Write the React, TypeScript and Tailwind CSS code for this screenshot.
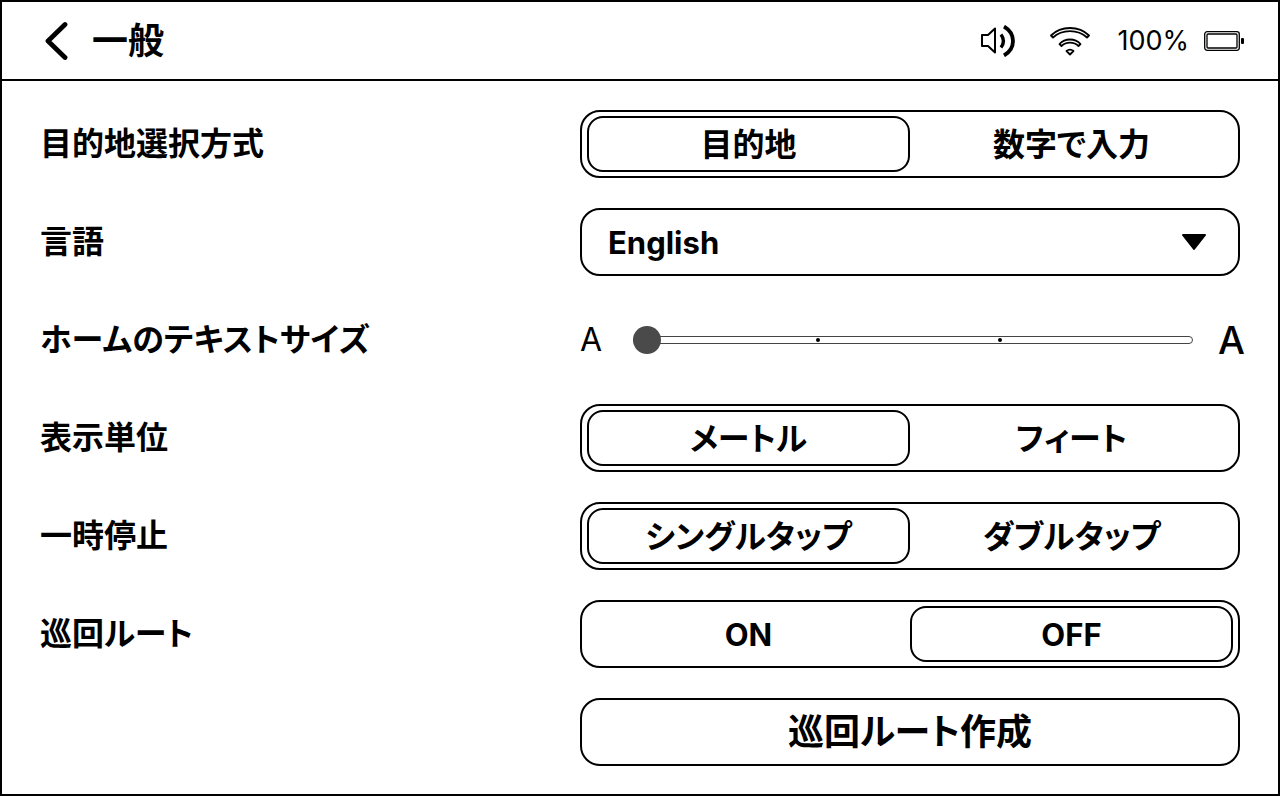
const jp = "font-['Inter','Noto_Sans_CJK_JP',sans-serif]";

function BackIcon() {
  return (
    <svg width="26" height="40" viewBox="0 0 26 40" fill="none" className="shrink-0">
      <path d="M23 3.5 L6 20 L23 36.5" stroke="#000" strokeWidth="4.8" strokeLinecap="round" strokeLinejoin="round" />
    </svg>
  );
}

function SpeakerIcon() {
  return (
    <svg width="34" height="32" viewBox="0 0 34 32" fill="none">
      <path d="M1 10 H7 L14 3.500 V27.500 L7 21 H1 Z" stroke="#000" strokeWidth="2" strokeLinejoin="round" />
      <path d="M20 9.500 C23 13.500 23 18.500 20 22.500" stroke="#000" strokeWidth="3.400" />
      <path d="M23 1.500 C35 8.500 35 23.500 23 30.500" stroke="#000" strokeWidth="3.800" />
    </svg>
  );
}

function WifiIcon() {
  return (
    <svg width="40" height="30" viewBox="0 0 40 30" fill="none">
      <path d="M1 9.500 C11 -0.500 29 -0.500 39 9.500 L37 11.500 C28 3 12 3 3 11.500 Z" stroke="#000" strokeWidth="1.800" strokeLinejoin="round" />
      <path d="M9.500 18 C15 12 25 12 30.500 18 L28.500 20 C24 15.500 16 15.500 11.500 20 Z" stroke="#000" strokeWidth="1.800" strokeLinejoin="round" />
      <path d="M16.500 25 C18.500 23.500 21.500 23.500 23.500 25 L20 28.500 Z" stroke="#000" strokeWidth="1.800" strokeLinejoin="round" />
    </svg>
  );
}

function BatteryIcon() {
  return (
    <svg width="41" height="22" viewBox="0 0 41 22" fill="none">
      <rect x="0.700" y="1.700" width="34.600" height="18.600" rx="2.500" stroke="#000" strokeWidth="1.300" />
      <rect x="3" y="4" width="30" height="14" rx="1" stroke="#000" strokeWidth="1.300" />
      <rect x="37" y="8" width="3" height="6" rx="1" fill="#000" />
    </svg>
  );
}

function Segment({ left, right, active, latin }: { left: string; right: string; active: "left" | "right"; latin?: boolean }) {
  return (
    <div className={`h-[68px] w-[660px] rounded-[20px] border-2 border-black px-[5px] py-[4px] grid grid-cols-2 ${latin ? "text-[31px]" : ""}`}>
      <div className={`flex items-center justify-center rounded-[16px] pt-[1px] ${active === "left" ? "border-2 border-black" : ""}`}>{left}</div>
      <div className={`flex items-center justify-center rounded-[16px] pt-[1px] ${active === "right" ? "border-2 border-black" : ""}`}>{right}</div>
    </div>
  );
}

function Slider() {
  return (
    <div className="h-[68px] w-[666px] flex items-center font-normal">
      <span className="w-[53px] text-[32px]">A</span>
      <div className="relative h-[8px] w-[560px] rounded-full border border-[#444] bg-white">
        <span className="absolute left-[-1px] top-[-11px] h-[28px] w-[28px] rounded-full bg-[#4a4a4a]" />
        <span className="absolute left-[182px] top-[1px] h-[4px] w-[4px] rounded-full bg-black" />
        <span className="absolute left-[364px] top-[1px] h-[4px] w-[4px] rounded-full bg-black" />
      </div>
      <span className="ml-[25px] text-[38px] leading-none font-medium">A</span>
    </div>
  );
}

function Row({ label, children }: { label?: string; children: React.ReactNode }) {
  return (
    <div className="flex items-center">
      <div className="w-[540px] pb-[1px]">{label}</div>
      {children}
    </div>
  );
}

export default function App() {
  return (
    <div className={`${jp} h-[796px] w-[1280px] border-2 border-black bg-white text-black font-bold text-[32px] leading-none overflow-hidden [font-feature-settings:'palt'] [font-kerning:none]`}>
      <header className="h-[79px] border-b-2 border-black flex items-center pl-[40px] pr-[33px]">
        <BackIcon />
        <h1 className="ml-[24px] text-[36px]">一般</h1>
        <div className="ml-auto flex items-center font-normal">
          <SpeakerIcon />
          <span className="ml-[35px]"><WifiIcon /></span>
          <span className="ml-[27px] text-[27px] pb-[1px]">100%</span>
          <span className="ml-[15px]"><BatteryIcon /></span>
        </div>
      </header>
      <main className="flex flex-col gap-[30px] pl-[38px] pt-[29px]">
        <Row label="目的地選択方式">
          <Segment left="目的地" right="数字で入力" active="left" />
        </Row>
        <Row label="言語">
          <div className="h-[68px] w-[660px] rounded-[20px] border-2 border-black pl-[26px] pr-[31px] flex items-center justify-between">
            <span className="text-[31px]">English</span>
            <svg width="26" height="18" viewBox="0 0 26 18">
              <path d="M2 2 H24 L13 16 Z" fill="#000" stroke="#000" strokeWidth="2" strokeLinejoin="round" />
            </svg>
          </div>
        </Row>
        <Row label="ホームのテキストサイズ">
          <Slider />
        </Row>
        <Row label="表示単位">
          <Segment left="メートル" right="フィート" active="left" />
        </Row>
        <Row label="一時停止">
          <Segment left="シングルタップ" right="ダブルタップ" active="left" />
        </Row>
        <Row label="巡回ルート">
          <Segment left="ON" right="OFF" active="right" latin />
        </Row>
        <Row>
          <div className="h-[68px] w-[660px] rounded-[20px] border-2 border-black flex items-center justify-center text-[36px]">巡回ルート作成</div>
        </Row>
      </main>
    </div>
  );
}
